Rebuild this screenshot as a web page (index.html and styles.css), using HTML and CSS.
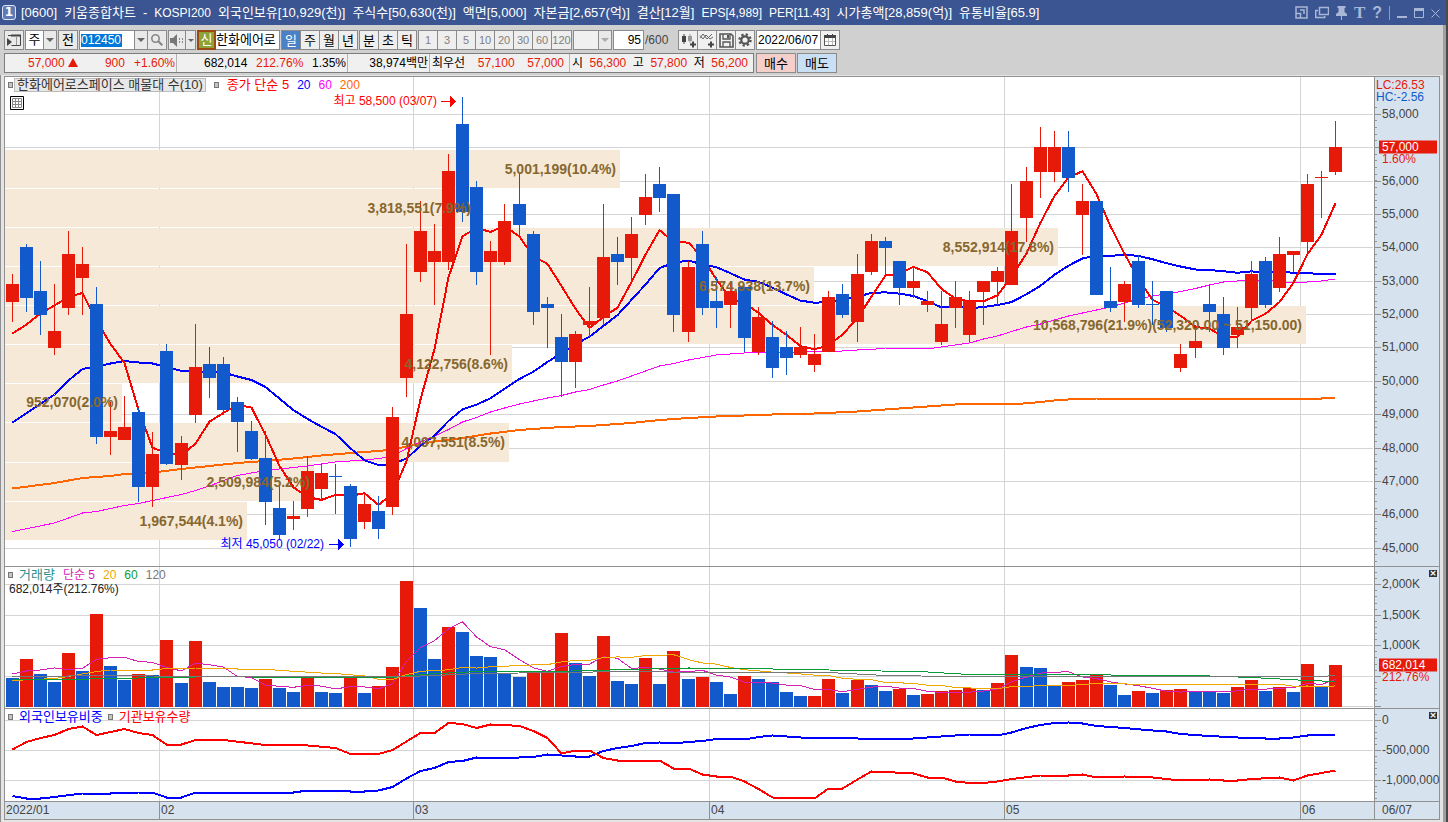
FILE: index.html
```html
<!DOCTYPE html>
<html lang="ko">
<head>
<meta charset="utf-8">
<title>[0600] 키움종합차트</title>
<link rel="stylesheet" href="styles.css">
</head>
<body>
<header class="titlebar">
  <span class="win-no">1</span>
  <h1 class="title">
    <span>[0600]</span><span>키움종합차트</span><span>-</span><span class="latin">KOSPI200</span><span>외국인보유[10,929(천)]</span><span>주식수[50,630(천)]</span><span>액면[5,000]</span><span>자본금[2,657(억)]</span><span>결산[12월]</span><span class="latin">EPS[4,989]</span><span class="latin">PER[11.43]</span><span>시가총액[28,859(억)]</span><span>유통비율[65.9]</span>
  </h1>
  <div class="win-tools">
    <button aria-label="화면 축소"><svg width="13" height="13" viewBox="0 0 13 13"><path d="M1 12V1h11v11H1z" fill="none" stroke="currentColor" stroke-width="1.500"/><path d="M1 7.500h4.500V12" fill="none" stroke="currentColor" stroke-width="1.500"/><path d="M5 4h4v4" fill="none" stroke="currentColor" stroke-width="1.500"/></svg></button>
    <button aria-label="창 복제"><svg width="14" height="13" viewBox="0 0 14 13"><path d="M4.500 1.500h9v7h-9zM3 4.500H.7v7h9V10" fill="none" stroke="currentColor" stroke-width="1.500"/></svg></button>
    <button aria-label="고정"><svg width="11" height="14" viewBox="0 0 11 14"><path d="M1.500 0h8v2h-1v4l2.500 2v2H6v4H5v-4H0V8l2.500-2V2h-1z" fill="currentColor"/></svg></button>
    <button class="glyph" aria-label="글꼴">T</button>
    <button class="glyph sans" aria-label="도움말">?</button>
    <i class="win-sep"></i>
    <button aria-label="최소화"><svg width="10" height="12" viewBox="0 0 10 12"><path d="M0 9h10v2H0z" fill="currentColor"/></svg></button>
    <button aria-label="최대화"><svg width="10" height="12" viewBox="0 0 10 12"><path d="M.5 3v7.500h9V3" fill="none" stroke="currentColor"/><path d="M0 1h10v3H0z" fill="currentColor"/></svg></button>
    <button aria-label="닫기"><svg width="9" height="12" viewBox="0 0 9 12"><path d="M.5 2.500l8 8M8.500 2.500l-8 8" stroke="currentColor" fill="none"/></svg></button>
  </div>
</header>

<section class="toolbar">
  <div class="row">
    <button class="box" aria-label="패널 열기"><svg width="15" height="15" viewBox="0 0 15 15"><path d="M4.500 2.500h9v10h-9M1 2.500h3.500" fill="none" stroke="#444"/><path d="M4 1.500h10v2H4zM0 5l5 4-5 4z" fill="#444"/><path d="M9.500 3v9" stroke="#999"/></svg></button>
    <div class="group">
      <select class="pick" aria-label="종목 구분"><option>주</option></select><button class="drop" aria-label="구분 선택"></button>
    </div>
    <button class="box">전</button>
    <div class="group">
      <input class="code" aria-label="종목코드" value="012450"><button class="drop" aria-label="최근 종목"></button><button class="cell" aria-label="검색"><svg width="14" height="14" viewBox="0 0 14 14"><circle cx="5.500" cy="5.500" r="3.700" fill="none" stroke="#888" stroke-width="1.600"/><path d="M8.300 8.300l4 4" stroke="#888" stroke-width="2.200"/></svg></button>
    </div>
    <div class="group">
      <button class="cell narrow" aria-label="소리"><svg width="14" height="13" viewBox="0 0 14 13"><path d="M0 4h3l4-4v13L3 9H0z" fill="#777"/><path d="M9 4h1v2H9zM9 7h1v2H9zM12 4h1v2h-1zM12 7h1v2h-1z" fill="#888"/></svg></button><button class="drop slim" aria-label="소리 설정"></button>
    </div>
    <div class="group name">
      <span class="tag">신</span><span class="stock">한화에어로</span>
    </div>
    <div class="group period"><button class="on">일</button><button>주</button><button>월</button><button>년</button></div>
    <div class="group period"><button>분</button><button>초</button><button>틱</button></div>
    <div class="group period dim"><button>1</button><button>3</button><button>5</button><button>10</button><button>20</button><button>30</button><button>60</button><button>120</button></div>
    <div class="group flat"><span class="blank"></span><button class="drop off" aria-label="주기 선택" disabled></button></div>
    <div class="count"><input aria-label="봉 개수" value="95"><span>/600</span></div>
    <div class="group tools">
      <button aria-label="차트 유형 추가"><svg width="16" height="16" viewBox="0 0 16 16"><path d="M2 4h4v6H2zM3.500 2h1v10h-1z" fill="#444"/><path d="M8 4h4v5H8zM9.500 2h1v9h-1z" fill="#999"/><path d="M10 12.500h6M13 9.500v6" stroke="#444" stroke-width="2"/></svg></button>
      <button aria-label="지표 추가"><svg width="16" height="16" viewBox="0 0 16 16"><path d="M1 6l3-4 4 5 5-5M1 3.500L4 7l3-4 4 4 3-2" fill="none" stroke="#666"/><path d="M9 12.500h6M12 9.500v6" stroke="#444" stroke-width="2"/></svg></button>
      <button aria-label="저장"><svg width="15" height="15" viewBox="0 0 15 15"><path d="M1 1h11l2 2v11H1z" fill="none" stroke="#555" stroke-width="1.600"/><path d="M4 1v5h7V1M4 14V9h7v5" fill="none" stroke="#555" stroke-width="1.300"/><path d="M8 2h2v3H8z" fill="#555"/></svg></button>
      <button aria-label="설정"><svg width="14" height="14" viewBox="0 0 14 14"><circle cx="7" cy="7" r="5.500" fill="none" stroke="#555" stroke-width="2.400" stroke-dasharray="2.200 2.120"/><circle cx="7" cy="7" r="3.700" fill="none" stroke="#555" stroke-width="2.200"/></svg></button>
    </div>
    <div class="group date">
      <input aria-label="기준일" value="2022/06/07"><button aria-label="달력"><svg width="12" height="12" viewBox="0 0 12 12"><path d="M.5 1.500h11v10H.5z" fill="#fff" stroke="#555"/><path d="M0 1h12v3H0zM3 0h1v2H3zM8 0h1v2H8z" fill="#444"/><path d="M1 7.500h10M4.500 4v7M8.500 4v7" stroke="#bbb"/></svg></button>
    </div>
  </div>
  <div class="row">
    <div class="quote">
      <div class="q q1 red"><span>57,000 <i class="up"></i></span><span>900</span><span>+1.60%</span></div>
      <div class="q q2"><span>682,014</span><span class="red">212.76%</span><span>1.35%</span></div>
      <div class="q q3"><span>38,974백만</span></div>
      <div class="q q4"><span>최우선</span><span class="red">57,100</span><span class="red">57,000</span></div>
      <div class="q q5"><span>시</span><span class="red">56,300</span><span>고</span><span class="red">57,800</span><span>저</span><span class="red">56,200</span></div>
    </div>
    <button class="order buy">매수</button>
    <button class="order sell">매도</button>
  </div>
</section>

<main class="frame">
  <div class="chart">
    <section class="plot" id="price">
      <div class="legend">
        <i class="mark"></i><span class="pill">한화에어로스페이스 매물대 수(10)</span><i class="mark second"></i>
        <span class="c-red">종가 단순 5</span><span class="c-blue">20</span><span class="c-pink">60</span><span class="c-orange">200</span>
      </div>
      <button class="grid-btn" aria-label="데이터 표"><svg width="14" height="14" viewBox="0 0 14 14"><path d="M.5.5h13v13H.5z" fill="#fff" stroke="#000"/><path d="M2.500 2.500h9v9h-9zM2.500 5.500h9M2.500 8.500h9M5.500 2.500v9M8.500 2.500v9" fill="none" stroke="#888"/></svg></button>
    </section>
    <section class="axis" id="price-axis"></section>
    <section class="plot" id="volume">
      <div class="legend">
        <i class="mark"></i><span class="c-teal">거래량</span><span class="c-magenta">단순 5</span><span class="c-gold">20</span><span class="c-green">60</span><span class="c-gray">120</span>
      </div>
      <div class="reading">682,014주(212.76%)</div>
    </section>
    <section class="axis" id="volume-axis"><button class="shut" aria-label="거래량 닫기"></button></section>
    <section class="plot" id="holding">
      <div class="legend">
        <i class="mark"></i><span class="c-blue">외국인보유비중</span><i class="mark tight"></i><span class="c-red">기관보유수량</span>
      </div>
    </section>
    <section class="axis" id="holding-axis"><button class="shut" aria-label="보유 비중 닫기"></button></section>
    <section class="time" id="time"></section>
    <section class="time-end">06/07</section>
  </div>
</main>
<script src="chart.js"></script>
</body>
</html>
```
FILE: styles.css
```css
* { box-sizing: border-box; }
:root {
  --line: #8b8b8b;
  --up: #e71a0a;
  --down: #125acb;
  --axis: #d7e2ef;
  --text: "Liberation Sans", "Noto Sans CJK KR", sans-serif;
}
body {
  margin: 0;
  min-height: 100vh;
  display: flex;
  flex-direction: column;
  background: #e4e4e4;
  border-right: 2px solid #4a4a4a;
  font: 12px/16px var(--text);
  color: #000;
}
button, input, select { font: inherit; color: inherit; margin: 0; padding: 0; border: 0; border-radius: 0; background: none; }
svg { display: block; }

.titlebar { display: flex; align-items: center; height: 25px; background: #3a5591; color: #fff; padding: 0 6px 0 2px; }
.win-no { width: 14px; height: 15px; border: 1px solid #dfe6f5; border-radius: 3px; background: #5f7bb5; font: bold 12px/13px "DejaVu Sans", sans-serif; text-align: center; }
.title { flex: 1; display: flex; gap: 7px; margin: 0 0 0 5px; font: 13px/24px var(--text); white-space: nowrap; }
.latin { font-size: 12px; }
.win-tools { display: flex; align-items: center; gap: 7px; color: #a9b7d6; }
.glyph { font: bold 17px/20px "Liberation Serif", serif; }
.glyph.sans { font: bold 16px/20px "Liberation Sans", sans-serif; }
.win-sep { width: 1px; height: 14px; background: #8f9bb3; }

.toolbar { background: #d0d0d0; border-right: 3px solid #a0a0a0; padding: 5px 4px 2px; display: flex; flex-direction: column; gap: 3px; }
.row { display: flex; height: 20px; }
.row > * { flex: none; }
.box, .group { display: flex; height: 20px; border: 1px solid var(--line); background: #e9e9e9; font-size: 13px; }
.group > * + * { border-left: 1px solid var(--line); }
.box { width: 20px; align-items: center; justify-content: center; margin-right: 1px; }
.group { margin-right: 1px; }
.pick { appearance: none; width: 17px; background: #fff; text-align: center; font-size: 13px; }
.drop { width: 13px; background: #e9e9e9; display: flex; align-items: center; justify-content: center; }
.drop::after { content: ""; border: 4px solid transparent; border-top-color: #666; border-bottom: 0; }
.drop.slim { width: 10px; }
.drop.slim::after { border-width: 3px 3px 0; }
.drop.off::after { border-top-color: #aaa; }
.code { width: 54px; background: linear-gradient(#0078d7, #0078d7) 1px 3px / 41px 13px no-repeat #fff; color: #fff; padding-left: 1px; font-size: 12px; }
.cell { width: 19px; display: flex; align-items: center; justify-content: center; }
.cell.narrow { width: 16px; }
.name { border: 0; background: #fff; width: 83px; }
.tag { width: 19px; border: 2px solid #9c4a12; background: #8ea23a; color: #fff; text-align: center; line-height: 15px; }
.group > .stock { border: solid var(--line); border-width: 1px 1px 1px 0; flex: 1; line-height: 17px; white-space: nowrap; }
.period button { width: 19px; line-height: 17px; background: #eee; }
.period button:first-child { width: 18px; }
.period .on { background: #4a81c6; color: #fff; }
.dim { color: #808080; font-size: 11px; }
.dim button { white-space: nowrap; }
.dim button:last-child { width: 20px; }
.blank { width: 24px; }
.flat { background: #f0f0f0; }
.count { display: flex; width: 65px; line-height: 20px; color: #444; }
.count input { width: 31px; height: 20px; border: 1px solid var(--line); background: #fff; text-align: right; padding-right: 2px; color: #000; }
.count span { padding-left: 1px; }
.tools button { width: 19px; display: flex; align-items: center; justify-content: center; background: #f0f0f0; }
.tools button:first-child { width: 18px; }
.date { background: #fff; font-size: 12px; }
.date input { width: 63px; padding-left: 1px; }
.date button { width: 19px; background: #f0f0f0; display: flex; align-items: center; justify-content: center; }

.quote { display: flex; width: 750px; border: 1px solid #7d7d7d; background: #f0f0f0; margin-right: 2px; }
.q { display: flex; justify-content: space-between; align-items: center; white-space: nowrap; padding: 0 1px 0 2px; }
.q + .q { border-left: 1px solid #b4b4b4; }
.q1 { width: 171px; padding-left: 23px; gap: 9px; }
.q1 :first-child { flex: 1; }
.q2 { width: 171px; padding-left: 27px; }
.q3 { width: 82px; justify-content: flex-end; }
.q4 { width: 140px; padding-right: 5px; }
.q5 { flex: 1; padding-right: 5px; }
.red { color: var(--up); }
.up { display: inline-block; border: 5px solid transparent; border-bottom: 9px solid var(--up); border-top: 0; }
.order { width: 40px; border: 1px solid var(--line); font-size: 13px; line-height: 17px; margin-right: 1px; }
.buy { background: #f5d0cb; }
.sell { background: #c8dff4; }

.frame { flex: 1; display: flex; padding: 1px 3px 0; border: solid #8f8f8f; border-width: 0 0 0 1px; border-right: 3px solid #a0a0a0; }
.chart {
  flex: 1;
  display: grid;
  grid-template-columns: 1fr 65px;
  grid-template-rows: 490fr 142fr 93fr 17px;
  border: 1px solid #919191;
  margin-bottom: 2px;
}
.plot, .axis { position: relative; border-bottom: 1px solid #919191; }
.plot { background: #fff; overflow: hidden; }
.axis { background: var(--axis); border-left: 1px solid #919191; }
.canvas { position: absolute; inset: 0; width: 100%; height: 100%; shape-rendering: crispEdges; }
.legend { position: absolute; z-index: 1; left: 3px; top: 1px; display: flex; align-items: center; gap: 8px; line-height: 14px; white-space: nowrap; }
.mark { width: 5px; height: 6px; border: 1px solid #777; background: #c4c4c4; }
.legend .mark + span { margin-left: -2px; font-size: 13px; }
.legend .second + span { margin-left: 0; }
.mark.tight { margin-left: -3px; }
.legend .mark + .pill { margin-left: -7px; }
.pill { border: 1px solid #bcbcbc; background: #e8e8e8; padding: 0 2px; line-height: 12px; color: #333; }
.c-red { color: #f00; }
.c-blue { color: #00f; }
.c-pink { color: #f0f; }
.c-orange { color: #f60; }
.c-teal { color: #2b8f8f; }
.c-magenta { color: #d61fb4; }
.c-gold { color: #f0a800; }
.c-green { color: #0a9a3a; }
.c-gray { color: #777; }
.grid-btn { position: absolute; z-index: 1; left: 5px; top: 19px; }
.reading { position: absolute; z-index: 1; left: 4px; top: 14px; color: #222; }
.note { position: absolute; z-index: 1; transform: translateY(-50%); white-space: nowrap; line-height: 14px; }
.band { font-weight: bold; font-size: 14px; color: #86672f; }
.high { color: #f00; }
.low { color: #00f; }
.scale { color: #444; }
.gain { color: var(--up); }
.loss { color: var(--down); }
.flag { background: var(--up); color: #fff; width: 58px; padding-left: 3px; line-height: 13px; }
.shut { position: absolute; right: 2px; top: 3px; width: 8px; height: 7px; background: #333; display: flex; align-items: center; justify-content: center; color: #fff; }
.shut::after { content: "×"; font: bold 9px/7px "DejaVu Sans", sans-serif; }
.time { position: relative; background: var(--axis); color: #444; overflow: hidden; }
.time-end { background: var(--axis); border-left: 1px solid #919191; color: #444; padding-left: 7px; }
.month { position: absolute; top: 0; bottom: 0; border-left: 1px solid #919191; padding-left: 1px; line-height: 16px; }
.month.first { border: 0; }
```
FILE: chart.js
```js
const NS = 'http://www.w3.org/2000/svg';
const UP = '#e71a0a', DOWN = '#125acb', GRID = '#d4d4d4';
const LEFT = 5, WIDTH = 1369;

// Bar centre of the i-th trading day.
const cx = i => 12 + 14 * i + Math.floor(i / 12);

// Candles: direction, high, body top, body bottom, low.
const candles = `R 274 284 302 322|B 244 247 298 312|B 261 291 315 335|R 284 331 348 355|R 231 254 308 315|R 247 264 278 315
B 287 304 437 444|R 402 431 437 455|R 396 427 440 440|B 408 412 487 502|R 432 454 487 507|B 344 351 464 465|R 436 443 465 480
R 324 367 415 423|B 347 364 378 398|B 357 364 410 415|B 397 402 422 452|B 421 431 459 460|B 431 458 502 525|B 486 508 535 539
R 501 516 519 530|R 456 471 509 517|R 464 473 489 499|B 464 476 477 514|B 484 486 539 547|R 494 504 522 529|B 496 511 529 539
R 407 417 507 515|R 244 314 378 397|R 201 231 272 282|R 224 251 262 305|R 154 171 262 270|B 97 124 212 222|B 181 187 272 285
R 241 251 262 355|R 204 221 262 265|B 174 204 225 236|B 231 234 312 325|B 297 304 308 348|B 314 337 362 397|R 331 334 362 388
R 287 321 325 337|R 204 257 318 325|B 237 254 262 285|R 217 234 258 282|R 174 197 215 225|B 167 184 198 212|B 194 194 315 332
R 261 267 332 342|B 231 244 308 315|B 277 301 308 328|R 281 291 305 328|B 287 287 338 352|R 307 317 352 355|B 321 337 368 378
B 331 347 358 375|R 327 347 355 358|R 334 354 365 372|R 291 297 352 352|B 284 294 315 318|R 254 274 322 342|R 234 241 272 275
B 237 241 248 275|B 261 261 288 305|R 267 281 288 298|R 291 301 305 312|R 291 324 342 345|R 281 297 308 328|R 291 301 335 342
R 281 281 292 325|R 267 271 282 305|R 184 231 285 285|R 167 181 218 242|R 127 147 172 198|R 131 147 172 182|B 131 147 178 192
R 184 201 215 255|B 201 201 295 295|B 267 301 308 312|R 281 284 302 322|B 255 261 305 308|B 281 304 305 325|B 291 291 328 332
R 344 354 368 372|R 325 341 348 358|B 284 304 312 332|B 297 314 348 355|R 307 327 335 348|R 261 274 308 322|B 257 261 305 308
R 237 254 288 292|R 251 251 255 272|R 174 184 242 252|R 171 177 178 218|R 121 147 172 175`
  .split(/[|\n]/).map(r => { const [d, ...v] = r.split(' '); return { up: d === 'R', v: v.map(Number) }; });
const closes = candles.map(c => c.up ? c.v[1] : c.v[2]);

const volumes = [678,659,674,682,653,671,614,666,680,674,675,640,683,641,682,687,687,688,679,688,692,677,692,693,677,693,686,667,
  581,608,659,627,632,656,657,674,677,673,673,633,663,676,636,681,684,658,684,651,679,677,682,694,676,679,682,692,696,696,679,693,
  680,685,691,689,695,694,691,690,688,690,683,655,667,668,685,682,680,675,685,695,691,693,690,689,691,692,693,687,680,691,687,692,664,686,665];
const redVolume = new Set([1,4,6,9,11,13,18,21,24,26,27,28,31,37,38,39,42,45,47,49,52,57,58,60,63,65,66,67,68,70,71,75,76,77,80,82,83,87,88,90,92,94]);

const average = (list, n) => list.map((_, i) => i < n - 1 ? null : [i, list.slice(i - n + 1, i + 1).reduce((a, b) => a + b) / n]).filter(Boolean);
const pairs = s => s.split(' ').map(p => p.split(':').map(Number));

const ma5 = pairs('0:333 1:324 2:313 3:305').concat(average(closes, 5));
const ma20 = pairs('0:422 3:394 4:380 5:368.5 6:366 7:363 8:360.5 9:362 10:363 11:366.5 12:370.5 13:371 14:371 15:372 16:376 17:379.5 18:386.5').concat(average(closes, 20));
const ma60 = pairs('0:531 3:522.5 5:512.5 6:511 8:505 9:503 10:500 12:494 13:490 14:485.5 15:480 16:475 17:472.5 18:470 19:468.5 20:467 21:465.5 22:463.5 23:461.5 24:460.5 25:459.5 26:458 27:456 28:448 29:441.5 30:435.5 31:429 32:421.5 33:417 34:411.5 35:407.5 36:403.5 37:400.5 38:397.5 39:395 40:391.5 41:389 42:384.5 43:380.5 44:375.5 45:370.5 46:365.5 47:363 48:359.5 49:357 50:354.5 51:353.5 52:352.5 56:352 57:351 59:350.5 60:349.5 61:349 62:347.5 64:347.5 65:348.5 66:346.5 67:344.5 68:342.5 69:338.5 70:335.5 71:331 72:326.5 73:323.5 74:319.5 75:315.5 76:312.5 77:309.5 78:306.5 79:302.5 80:298.5 81:295.5 82:293.5 83:291 84:288 85:284.5 86:281.5 87:280.5 88:280 89:280 90:281 91:282.5 92:281.5 93:280.5 94:278.5');
const ma200 = pairs('0:488 3:482.5 5:477.5 7:475.5 8:473.5 10:472 12:468.5 14:465.5 16:462.5 18:460.5 20:458 22:455 24:452.5 26:450.5 27:449 28:446 30:441 32:437.5 34:433 36:429.5 39:426.5 41:425.5 44:422.5 46:419.5 48:417.5 50:416 52:415 54:414 57:413 60:411 64:407 67:404 69:403.5 71:404 73:401.5 74:400 75:399 77:398 93:398 94:397');
const vma5 = pairs('0:673.5 1:670.5 2:669.5 3:667.5').concat(average(volumes, 5));
const vma20 = pairs('0:680 3:678 4:676 6:671 7:669.5 10:669.5 11:668 12:668.5 13:667.5 15:667.5 16:668.5 18:668.5').concat(average(volumes, 20));
const vma60 = pairs('0:679 5:679 6:678 9:677.5 12:677 14:676 20:677 27:677 29:674 31:672.5 33:671 37:671.5 41:670 44:669 48:667.5 52:668 56:669 60:670 65:671.5 68:674 76:674 80:675 84:675 88:677 90:678.5 92:680 94:681');
const vma120 = pairs('0:676 8:675 12:676 28:676 30:675 33:673 36:672.5 44:671 49:672 58:672 62:675 67:676 72:675.5 82:676.5 93:676 94:675');
const foreign = pairs('0:795.5 1:798 2:798 3:796.5 5:793 7:793 9:792 10:792 11:797 12:797 13:792 20:792 21:790 23:790 24:791 25:791 26:790 27:786.5 28:778 29:770.5 30:767.5 31:761.5 32:760.5 33:757 34:758 37:756.5 38:754 39:755 40:756 41:756 42:750.5 43:747.5 44:745.5 45:742.5 46:742 47:743 48:741.5 49:740.5 50:738.5 52:739 53:736.5 54:735 56:737 60:738 63:739 65:737 67:735 68:734 69:734 70:735 71:732 72:727.5 73:724.5 74:722.5 75:722 76:723 77:725.5 79:727.5 81:730 82:731 83:733.5 85:735.5 87:737 89:738 90:738 91:737 92:735 94:734');
const inst = pairs('0:749 1:741.5 2:737.5 3:734.5 4:728.5 5:726 6:734.5 7:731.5 8:728.5 9:732.5 10:734.5 11:744 12:744 13:739.5 15:739.5 18:744.5 21:745 23:747.5 24:753.5 26:753.5 27:749.5 28:741 29:732.5 30:732.5 31:722.5 32:723.5 33:727.5 34:724 35:724.5 36:725.5 37:730.5 38:737.5 39:753 40:750 41:750 42:757.5 43:760 46:760 47:768 48:768 49:774 50:776 51:776 52:781 53:788.5 54:797 56:797.5 57:798 58:788 59:788 60:779 61:771 62:771.5 64:773 65:777 66:777 67:781 68:782.5 69:782.5 70:781 71:778.5 73:775 75:775 76:774 77:777 79:776 81:777 83:780 85:779 86:780 87:780 88:778.5 90:777 91:780 92:775 94:770');

// Volume-at-price rows: top, bottom, right edge, caption.
const bands = [
  [150, 188, 620, '5,001,199(10.4%)'], [189, 227, 475, '3,818,551(7.9%)'], [228, 266, 1058, '8,552,914(17.8%)'],
  [267, 305, 814, '6,574,938(13.7%)'], [306, 344, 1306, '10,568,796(21.9%)(52,320.00 ~ 51,150.00)'],
  [345, 383, 512, '4,122,756(8.6%)'], [384, 422, 122, '952,070(2.0%)'], [423, 462, 509, '4,097,551(8.5%)'],
  [463, 501, 314, '2,509,984(5.2%)'], [502, 540, 247, '1,967,544(4.1%)']
];
const months = [[5, '2022/01'], [159, '02'], [413, '03'], [709, '04'], [1004, '05'], [1300, '06']];

const PANELS = {
  price: { top: 77, height: 489, grid: [114,147,181,214,247,281,314,347,381,414,448,481,514,548] },
  volume: { top: 567, height: 141, grid: [584, 615, 645, 676, 706] },
  holding: { top: 709, height: 92, grid: [720, 750, 780] }
};

function add(parent, tag, attrs) {
  const el = document.createElementNS(NS, tag);
  for (const k in attrs) el.setAttribute(k, attrs[k]);
  parent.appendChild(el);
  return el;
}
const rect = (p, x, y, width, height, fill) => add(p, 'rect', { x, y, width, height, fill });
const line = (p, pts, stroke, w) => add(p, 'polyline', {
  points: pts.map(([i, y]) => (cx(i) + 0.5) + ',' + (y + 0.5)).join(' '), fill: 'none', stroke, 'stroke-width': w
});

function canvas(id, x, width) {
  const p = PANELS[id.replace('-axis', '')];
  return add(document.getElementById(id), 'svg', {
    class: 'canvas', viewBox: `${x} ${p.top} ${width} ${p.height}`, preserveAspectRatio: 'none'
  });
}
function note(id, cls, text, y, x, fromRight) {
  const p = PANELS[id.replace('-axis', '')];
  const el = document.createElement('div');
  el.className = 'note ' + cls;
  el.textContent = text;
  el.style.top = (y - p.top) / p.height * 100 + '%';
  if (id.endsWith('-axis')) el.style.left = x + 'px';
  else if (fromRight) el.style.right = (LEFT + WIDTH - x) / WIDTH * 100 + '%';
  else el.style.left = (x - LEFT) / WIDTH * 100 + '%';
  document.getElementById(id).appendChild(el);
}
function grid(svg, id) {
  const p = PANELS[id];
  p.grid.forEach(y => rect(svg, LEFT, y, WIDTH - 1, 1, GRID));
  months.slice(1).forEach(([x]) => rect(svg, x, p.top, 1, p.height, GRID));
}

// Price panel
const price = canvas('price', LEFT, WIDTH);
grid(price, 'price');
bands.forEach(([t, b, r, label]) => {
  rect(price, LEFT, t, r - LEFT, b - t, '#f6e9d7');
  note('price', 'band', label, (t + b) / 2 - 0.5, r - 4, true);
});
line(price, ma60, '#f0f', 1);
line(price, ma200, '#f60', 2);
line(price, ma20, '#00f', 2);
line(price, ma5, '#f00', 2);
candles.forEach(({ up, v: [h, t, b, l] }, i) => {
  const c = up ? UP : DOWN;
  rect(price, cx(i), h, 1, l - h, c);
  rect(price, cx(i) - 6, t, 13, b - t, c);
});
rect(price, 441, 101, 10, 1, '#f00');
add(price, 'path', { d: 'M450 96l6 5.500-6 5.500z', fill: '#f00' });
rect(price, 329, 544, 10, 1, '#00f');
add(price, 'path', { d: 'M338 539l6 5.500-6 5.500z', fill: '#00f' });
note('price', 'high', '최고 58,500 (03/07)', 101, 437, true);
note('price', 'low', '최저 45,050 (02/22)', 544, 324, true);

// Volume panel
const vol = canvas('volume', LEFT, WIDTH);
grid(vol, 'volume');
volumes.forEach((y, i) => rect(vol, cx(i) - 6, y, 13, 707 - y, redVolume.has(i) ? UP : DOWN));
line(vol, vma5, '#d61fb4', 1);
line(vol, vma20, '#f0a800', 1);
line(vol, vma60, '#0a9a3a', 1);
line(vol, vma120, '#777', 1);

// Holdings panel
const hold = canvas('holding', LEFT, WIDTH);
grid(hold, 'holding');
line(hold, foreign, '#00f', 2);
line(hold, inst, '#f00', 2);

// Right-hand scales
function ticks(id, from, to, step) {
  const svg = canvas(id + '-axis', 0, 64);
  for (let y = from; y < to; y += step) rect(svg, 0, Math.round(y), 2, 1, '#919191');
  PANELS[id].grid.forEach(y => rect(svg, 0, y, 6, 1, '#919191'));
}
ticks('price', 107, 563, 6.677);
ticks('volume', 572, 707, 6.1);
ticks('holding', 714, 799, 6);
PANELS.price.grid.forEach((y, k) => { if (k !== 1) note('price-axis', 'scale', (58 - k) + ',000', y, 7); });
note('price-axis', 'gain', 'LC:26.53', 85, 1);
note('price-axis', 'loss', 'HC:-2.56', 97, 1);
note('price-axis', 'gain', '1.60%', 159, 7);
note('price-axis', 'flag', '57,000', 147, 4);
['2,000K', '1,500K', '1,000K'].forEach((t, k) => note('volume-axis', 'scale', t, [584, 615, 645][k], 7));
note('volume-axis', 'gain', '212.76%', 677, 7);
note('volume-axis', 'flag', '682,014', 665, 4);
['0', '-500,000', '-1,000,000'].forEach((t, k) => note('holding-axis', 'scale', t, [720, 750, 780][k], 7));

// Month strip
months.forEach(([x, t], k) => {
  const el = document.createElement('span');
  el.className = 'month' + (k ? '' : ' first');
  el.textContent = t;
  el.style.left = (x - LEFT) / WIDTH * 100 + '%';
  document.getElementById('time').appendChild(el);
});
```
